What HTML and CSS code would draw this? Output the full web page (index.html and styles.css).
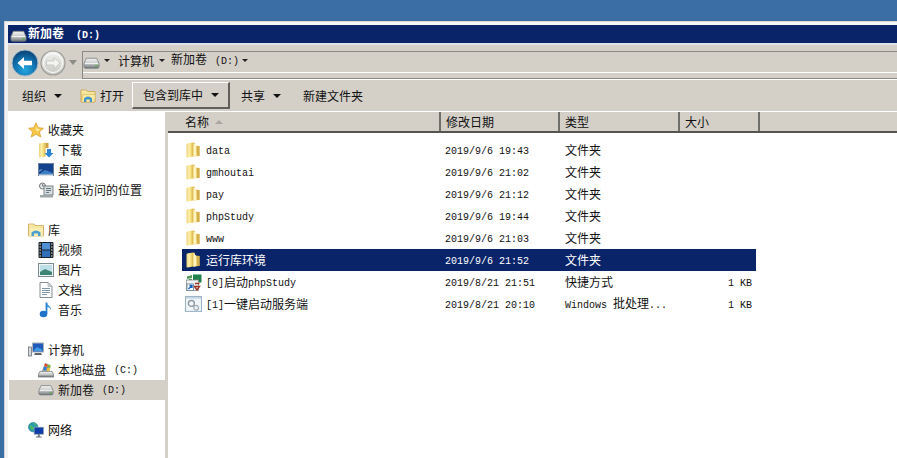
FILE: index.html
```html
<!DOCTYPE html>
<html lang="zh-CN">
<head>
<meta charset="utf-8">
<title>新加卷 (D:)</title>
<link rel="stylesheet" href="styles.css">
</head>
<body>
<svg class="defs" width="0" height="0" aria-hidden="true">
  <defs>
    <linearGradient id="gFolder" x1="0" y1="0" x2="1" y2="0">
      <stop offset="0" stop-color="#ecd078"/><stop offset=".4" stop-color="#fdf0ae"/><stop offset=".62" stop-color="#f8e284"/><stop offset="1" stop-color="#d9b650"/>
    </linearGradient>
    <linearGradient id="gDrive" x1="0" y1="0" x2="0" y2="1">
      <stop offset="0" stop-color="#f4f4f2"/><stop offset=".55" stop-color="#c5c8c8"/><stop offset="1" stop-color="#6f7578"/>
    </linearGradient>
    <radialGradient id="gBack" cx=".5" cy=".75" r=".75">
      <stop offset="0" stop-color="#23a8e0"/><stop offset=".6" stop-color="#0f6ba8"/><stop offset="1" stop-color="#0b3f6f"/>
    </radialGradient>
    <linearGradient id="gFwd" x1="0" y1="0" x2="0" y2="1">
      <stop offset="0" stop-color="#f2f2f0"/><stop offset="1" stop-color="#c6c6c2"/>
    </linearGradient>
    <linearGradient id="gLib" x1="0" y1="0" x2="0" y2="1">
      <stop offset="0" stop-color="#fdf0b0"/><stop offset="1" stop-color="#e8c768"/>
    </linearGradient>
    <symbol id="i-folder" viewBox="0 0 14 16">
      <path d="M1 1.500 7 .5V14.500L1.500 15.500C.8 15.500 .5 15 .5 14.500V2.500z" fill="url(#gFolder)"/>
      <path d="M7 .5 9 1V3.500L13.500 4V14L7 14.500z" fill="#e6c765"/>
      <path d="M7.500 1.500 10 3.500 10.500 14 7.500 15z" fill="#fff4bd"/>
      <path d="M11 4 13.500 4.300V13.800L11 14z" fill="#d4ae48"/>
    </symbol>
    <symbol id="i-drive" viewBox="0 0 18 12">
      <path d="M3.500 1h11L17 6.500V10a1.500 1.500 0 0 1-1.500 1.500h-13A1.500 1.500 0 0 1 1 10V6.500z" fill="url(#gDrive)" stroke="#75797b" stroke-width=".8"/>
      <path d="M2 6.500h14" stroke="#fff" stroke-width=".8"/>
      <rect x="13" y="8" width="2.500" height="1.600" fill="#5ab04a"/>
    </symbol>
    <symbol id="i-back" viewBox="0 0 28 28">
      <circle cx="14" cy="14" r="13" fill="url(#gBack)" stroke="#a9bccb" stroke-width="1"/>
      <path d="M6.500 14 13 8v3.800h8v4.400h-8V20z" fill="#fff"/>
    </symbol>
    <symbol id="i-fwd" viewBox="0 0 26 26">
      <circle cx="13" cy="13" r="12" fill="url(#gFwd)" stroke="#9d9d98" stroke-width="1.200"/>
      <circle cx="13" cy="13" r="9.500" fill="none" stroke="#fff" stroke-width="1"/>
      <path d="M20 13 14 7.500v3.500H6.500v4H14v3.500z" fill="#f4f4f2" stroke="#bdbdb8" stroke-width=".7"/>
    </symbol>
    <symbol id="i-open" viewBox="0 0 16 16">
      <path d="M1 2h5l1.500 1.500H15V14H1z" fill="url(#gLib)" stroke="#c69f45" stroke-width=".8"/>
      <path d="M1.500 14 3 6.500h12.500L14.500 14z" fill="#f8e9a3" stroke="#d2ad54" stroke-width=".5"/>
      <path d="M4 14V10.500Q8 6.500 12 10.500V14H9.800V11.500H6.200V14z" fill="#3d93c9"/>
    </symbol>
    <symbol id="i-star" viewBox="0 0 16 16">
      <path d="M8 .8 10.200 5.700 15.500 6.300 11.500 9.800 12.700 15 8 12.300 3.300 15 4.500 9.800 .5 6.300 5.800 5.700z" fill="#f7c64a" stroke="#d49a25" stroke-width=".7"/>
      <path d="M8 3.500 9.300 7 12.500 7.400 9.800 9.300 8 8z" fill="#fdf0a8"/>
    </symbol>
    <symbol id="i-download" viewBox="0 0 16 16">
      <path d="M1 1.500 7.500 .5V14.500L1 15.500z" fill="url(#gFolder)"/>
      <path d="M7.500 1h3v5h-3z" fill="#caa23f"/>
      <path d="M9 7h4v4h2.500L11 15.500 6.500 11H9z" fill="#2b85d6"/>
    </symbol>
    <symbol id="i-desktop" viewBox="0 0 16 14">
      <rect x=".5" y=".5" width="15" height="12" fill="#12418d" stroke="#6a7f9d"/>
      <path d="M1 11 7 7l8 3v2H1z" fill="#3e7fc4"/>
      <path d="M1 8 4 6.500" stroke="#8db4de"/>
      <rect x="1" y="11.500" width="14" height="1.500" fill="#d8dde2"/>
    </symbol>
    <symbol id="i-recent" viewBox="0 0 16 16">
      <circle cx="4.500" cy="4" r="3" fill="#e5e7e7" stroke="#6c7478"/>
      <path d="M4.500 2v2h2" stroke="#4a5256" fill="none" stroke-width=".7"/>
      <rect x="6" y="4" width="9" height="9" fill="#d8dcdc" stroke="#7b8386"/>
      <path d="M8 6.500h5M8 8.500h5M8 10.500h3" stroke="#5d7a86"/>
      <rect x="2" y="13" width="13" height="2.500" fill="#9da7aa"/>
    </symbol>
    <symbol id="i-lib" viewBox="0 0 16 16">
      <path d="M.5 2h5.500l1 1.500H15.500V14H.5z" fill="url(#gLib)" stroke="#c9a655" stroke-width=".8"/>
      <path d="M1 14 1.500 6H15V14z" fill="#fbeeb2"/>
      <path d="M3.500 14V10.500Q8 6.500 12.500 10.500V14H10V11.500H6V14z" fill="#4aa0cf"/>
    </symbol>
    <symbol id="i-video" viewBox="0 0 15 16">
      <rect width="15" height="16" rx="1" fill="#1c2328"/>
      <rect x="3.500" y="1" width="8" height="6.500" fill="#4f8fd6"/>
      <rect x="3.500" y="8.500" width="8" height="6.500" fill="#2f6fb8"/>
      <path d="M1 2h1.500M1 5h1.500M1 8h1.500M1 11h1.500M1 14h1.500M12.500 2H14M12.500 5H14M12.500 8H14M12.500 11H14M12.500 14H14" stroke="#d8dee3" stroke-width="1.200"/>
    </symbol>
    <symbol id="i-picture" viewBox="0 0 16 14">
      <rect x=".5" y=".5" width="15" height="13" fill="#f0f4f5" stroke="#7d8b92"/>
      <rect x="2" y="2" width="12" height="10" fill="#bfdfe6"/>
      <path d="M2 9 7 6l7 3v3H2z" fill="#3d8474"/>
    </symbol>
    <symbol id="i-doc" viewBox="0 0 14 16">
      <path d="M1 .5H9L13 4.500V15.500H1z" fill="#fdfdfd" stroke="#848e94"/>
      <path d="M9 .5V4.500H13z" fill="#d5dadd" stroke="#848e94" stroke-width=".5"/>
      <path d="M3 6.500h8M3 8.500h8M3 10.500h8M3 12.500h5" stroke="#7f98a8"/>
    </symbol>
    <symbol id="i-music" viewBox="0 0 14 16">
      <path d="M7.500 .5V11.500" stroke="#2b7fd0" stroke-width="1.800"/>
      <path d="M8 1c.5 3 4.500 3 4 7-.7-2-2.500-2.800-4-3z" fill="#3d95de"/>
      <ellipse cx="4.500" cy="12" rx="3.800" ry="3.200" fill="#1f73c6"/>
    </symbol>
    <symbol id="i-computer" viewBox="0 0 16 16">
      <rect x="4.500" y="1" width="11" height="9" fill="#1e5bbb" stroke="#aab2b8"/>
      <path d="M6 8 9 5l5 2.500V9H6z" fill="#3f9ae0"/>
      <rect x=".5" y="5" width="3" height="9" fill="#d5d9dc" stroke="#596268" stroke-width=".7"/>
      <path d="M7 11h6l1 2H6z" fill="#5d666c"/>
    </symbol>
    <symbol id="i-localdisk" viewBox="0 0 17 17">
      <path d="M2 10h13l1.500 3v3H.5v-3z" fill="url(#gDrive)" stroke="#5f6669" stroke-width=".7"/>
      <path d="M4 10 7.500 1 13 3.500 12 10z" fill="#8b99a1"/>
      <rect x="7" y="2" width="3" height="3" fill="#e2512d"/>
      <rect x="10.300" y="3" width="3" height="3" fill="#7cb73a"/>
      <rect x="6" y="5.500" width="3" height="3" fill="#2d7ed8"/>
      <rect x="9.500" y="6.500" width="3" height="3" fill="#f4c22d"/>
    </symbol>
    <symbol id="i-network" viewBox="0 0 17 17">
      <circle cx="5.500" cy="5.500" r="5" fill="#2b9db3" stroke="#1d6f82" stroke-width=".6"/>
      <path d="M2 4c2-1 3 1 4 2S4 9 3 8zM6 1c2 0 3 1 3 3L7 3z" fill="#4fba5a"/>
      <rect x="6.500" y="5.500" width="10" height="7.500" fill="#103ea8" stroke="#9da7ae" stroke-width=".7"/>
      <path d="M10.500 13h2v2.500h-2zM8.500 15.500h6v1h-6z" fill="#68727a"/>
    </symbol>
    <symbol id="i-php" viewBox="0 0 17 17">
      <rect x="8" y=".5" width="8.500" height="8" fill="#22814a"/>
      <path d="M2 2.500 7 1v3L2 5zM4 5h3v2H4z" fill="#4c9a53"/>
      <rect x="1.500" y="6" width="12" height="10.500" fill="#eef2f2" stroke="#7b8488" stroke-width=".7"/>
      <rect x="2" y="10" width="6.500" height="6.500" fill="#fff" stroke="#4f6f8a" stroke-width=".7"/>
      <path d="M3.500 15 6.500 12M4.500 11.500H7V14" stroke="#0f5ec2" stroke-width="1.300" fill="none"/>
      <path d="M10 9.500h4.500M9.500 12.500h5L12 16z" stroke="#a0362a" stroke-width="1.400" fill="none"/>
    </symbol>
    <symbol id="i-bat" viewBox="0 0 16 16">
      <rect x=".5" y=".5" width="15" height="14" fill="#f1f5f8" stroke="#9cb4c8"/>
      <rect x="1" y="1" width="14" height="1.500" fill="#c3d5e4"/>
      <circle cx="6" cy="7" r="2.800" fill="none" stroke="#8f9ba3" stroke-width="1.300"/>
      <circle cx="10.500" cy="11" r="2.200" fill="none" stroke="#a4aeb5" stroke-width="1.200"/>
    </symbol>
  </defs>
</svg>

<div class="window">
  <div class="titlebar">
    <svg class="icon-title"><use href="#i-drive"/></svg>
    <span class="title-text">新加卷<span class="lat title-letter">(D:)</span></span>
  </div>

  <div class="addressbar">
    <div class="nav">
      <svg class="btn-back"><use href="#i-back"/></svg>
      <svg class="btn-fwd"><use href="#i-fwd"/></svg>
      <span class="arrow-hollow"></span>
    </div>
    <div class="crumbs">
      <svg class="icon-crumb"><use href="#i-drive"/></svg>
      <span class="tri tri-small"></span>
      <span class="crumb crumb-computer">计算机</span>
      <span class="tri tri-small"></span>
      <span class="crumb crumb-volume">新加卷<span class="lat letter">(D:)</span></span>
      <span class="tri tri-small"></span>
    </div>
  </div>

  <div class="toolbar">
    <span class="tool tool-organize">组织<span class="tri"></span></span>
    <span class="tool tool-open"><svg class="icon16"><use href="#i-open"/></svg>打开</span>
    <span class="tool tool-include">包含到库中<span class="tri"></span></span>
    <span class="tool tool-share">共享<span class="tri"></span></span>
    <span class="tool">新建文件夹</span>
  </div>

  <div class="main">
    <nav class="sidebar">
      <div class="group">
        <div class="nav-row"><svg class="icon16"><use href="#i-star"/></svg>收藏夹</div>
        <div class="nav-row child"><svg class="icon16"><use href="#i-download"/></svg>下载</div>
        <div class="nav-row child"><svg class="icon16"><use href="#i-desktop"/></svg>桌面</div>
        <div class="nav-row child"><svg class="icon16"><use href="#i-recent"/></svg>最近访问的位置</div>
      </div>
      <div class="group">
        <div class="nav-row"><svg class="icon16"><use href="#i-lib"/></svg>库</div>
        <div class="nav-row child"><svg class="icon16"><use href="#i-video"/></svg>视频</div>
        <div class="nav-row child"><svg class="icon16"><use href="#i-picture"/></svg>图片</div>
        <div class="nav-row child"><svg class="icon16"><use href="#i-doc"/></svg>文档</div>
        <div class="nav-row child"><svg class="icon16"><use href="#i-music"/></svg>音乐</div>
      </div>
      <div class="group">
        <div class="nav-row"><svg class="icon16"><use href="#i-computer"/></svg>计算机</div>
        <div class="nav-row child"><svg class="icon16"><use href="#i-localdisk"/></svg>本地磁盘<span class="lat letter">(C:)</span></div>
        <div class="nav-row child selected"><svg class="icon16"><use href="#i-drive"/></svg>新加卷<span class="lat letter">(D:)</span></div>
      </div>
      <div class="group">
        <div class="nav-row"><svg class="icon16"><use href="#i-network"/></svg>网络</div>
      </div>
    </nav>

    <section class="files">
      <div class="header">
        <div class="hcell h-name">名称<span class="sort"></span></div>
        <div class="hcell h-date">修改日期</div>
        <div class="hcell h-type">类型</div>
        <div class="hcell h-size">大小</div>
      </div>
      <div class="rows">
        <div class="row"><div class="c-name"><svg class="icon-file"><use href="#i-folder"/></svg><span class="lat">data</span></div><div class="c-date lat">2019/9/6 19:43</div><div class="c-type">文件夹</div><div class="c-size lat"></div></div>
        <div class="row"><div class="c-name"><svg class="icon-file"><use href="#i-folder"/></svg><span class="lat">gmhoutai</span></div><div class="c-date lat">2019/9/6 21:02</div><div class="c-type">文件夹</div><div class="c-size lat"></div></div>
        <div class="row"><div class="c-name"><svg class="icon-file"><use href="#i-folder"/></svg><span class="lat">pay</span></div><div class="c-date lat">2019/9/6 21:12</div><div class="c-type">文件夹</div><div class="c-size lat"></div></div>
        <div class="row"><div class="c-name"><svg class="icon-file"><use href="#i-folder"/></svg><span class="lat">phpStudy</span></div><div class="c-date lat">2019/9/6 19:44</div><div class="c-type">文件夹</div><div class="c-size lat"></div></div>
        <div class="row"><div class="c-name"><svg class="icon-file"><use href="#i-folder"/></svg><span class="lat">www</span></div><div class="c-date lat">2019/9/6 21:03</div><div class="c-type">文件夹</div><div class="c-size lat"></div></div>
        <div class="row active"><div class="c-name"><svg class="icon-file"><use href="#i-folder"/></svg>运行库环境</div><div class="c-date lat">2019/9/6 21:52</div><div class="c-type">文件夹</div><div class="c-size lat"></div></div>
        <div class="row"><div class="c-name"><svg class="icon-file icon-app"><use href="#i-php"/></svg><span class="lat">[0]</span>启动<span class="lat">phpStudy</span></div><div class="c-date lat">2019/8/21 21:51</div><div class="c-type">快捷方式</div><div class="c-size lat">1 KB</div></div>
        <div class="row"><div class="c-name"><svg class="icon-file icon-app"><use href="#i-bat"/></svg><span class="lat">[1]</span>一键启动服务端</div><div class="c-date lat">2019/8/21 20:10</div><div class="c-type"><span class="lat">Windows </span>批处理<span class="lat">...</span></div><div class="c-size lat">1 KB</div></div>
      </div>
    </section>
  </div>
</div>
</body>
</html>
```

FILE: styles.css
```css
* { box-sizing: border-box; }

html, body {
  margin: 0;
  height: 458px;
  overflow: hidden;
}

body {
  background: #3a6ea5;
  padding-top: 21px;
  font: 12px/20px "Noto Sans CJK SC", "Liberation Sans", sans-serif;
  color: #111;
}

.defs { display: block; height: 0; }

.lat {
  font-family: "Liberation Mono", "Noto Sans CJK SC", monospace;
  font-size: 10px;
}

.letter { padding-left: 8px; }
.title-letter { padding-left: 12px; font-weight: 700; }

.window {
  margin-left: 4px;
  height: 437px;
  background: #d4d0c8;
  border-top: 1px solid #dcd9d2;
  border-left: 1px solid #cfd3dc;
  display: flex;
  flex-direction: column;
  padding-left: 3px;
  padding-top: 3px;
  box-shadow: inset 3px 0 0 #f2f2f2, inset 0 3px 0 #f6f7f9;
}

.titlebar {
  height: 18px;
  flex: none;
  background: #0a246a;
  color: #fff;
  display: flex;
  align-items: center;
  padding-left: 2px;
  gap: 1px;
}

.title-text { font-weight: 700; line-height: 18px; }
.icon-title { width: 17px; height: 12px; margin-top: 4px; }

.addressbar {
  flex: none;
  height: 36px;
  display: flex;
  align-items: flex-end;
  border-top: 2px solid #dfe1ea;
}

.nav {
  width: 74px;
  height: 34px;
  padding-left: 3px;
  padding-top: 1px;
  display: flex;
  align-items: center;
  flex: none;
}

.btn-back { width: 28px; height: 28px; flex: none; }
.btn-fwd { width: 26px; height: 26px; flex: none; margin-left: 1px; }

.arrow-hollow {
  margin-left: 3px;
  border: 4px solid transparent;
  border-top: 5px solid #8d8d88;
  border-bottom-width: 0;
  flex: none;
}

.crumbs {
  flex: 1;
  height: 28px;
  border-top: 1px solid #8b8a85;
  border-bottom: 1px solid #8b8a85;
  border-left: 1px solid #8b8a85;
  box-shadow: inset 0 -5px 0 #d4d0c8, inset 0 -6px 0 #fff;
  display: flex;
  align-items: center;
  padding-bottom: 9px;
}

.crumb { line-height: 20px; }
.crumb-computer { margin: 0 5px 0 8px; }
.crumb-volume { margin: 0 3px 0 6px; }
.icon-crumb { width: 17px; height: 12px; margin-top: 4px; margin-right: 4px; flex: none; }

.tri {
  display: inline-block;
  border: 4px solid transparent;
  border-top: 4px solid #111;
  border-bottom-width: 0;
  flex: none;
  vertical-align: 2px;
  margin-left: 8px;
}

.tri-small {
  margin-left: 0;
  border-width: 3px 3px 0;
  border-top-color: #222;
}

.toolbar {
  flex: none;
  height: 33px;
  border-top: 1px solid #fff;
  border-bottom: 1px solid #fff;
  display: flex;
  align-items: center;
  padding-left: 14px;
  white-space: nowrap;
}

.tool { display: inline-flex; align-items: center; color: #111; }
.tool-organize { width: 56px; }
.tool-open { width: 54px; padding-left: 2px; }
.tool-include {
  width: 98px;
  height: 27px;
  padding-left: 10px;
  background: #d4d0c8;
  border: 1px solid #fff;
  border-right: 2px solid #605f5b;
  border-bottom: 2px solid #605f5b;
}
.tool-share { width: 62px; margin-left: 11px; }

.main {
  flex: 1;
  min-height: 0;
  display: flex;
}

.sidebar {
  width: 157px;
  flex: none;
  background: #fff;
  padding-top: 8px;
  display: flex;
  flex-direction: column;
  gap: 20px;
}

.nav-row {
  height: 20px;
  display: flex;
  align-items: center;
  padding-left: 20px;
  white-space: nowrap;
}
.nav-row .lat { padding-top: 2px; }
.nav-row.child { padding-left: 30px; }
.nav-row.selected { background: #d4d0c8; margin-left: 1px; padding-left: 29px; margin-right: -2px; }

.icon16 { width: 16px; height: 16px; flex: none; margin-right: 4px; }

.files {
  flex: 1;
  margin-left: 3px;
  background: #fff;
  min-width: 0;
  display: flex;
  flex-direction: column;
}

.header {
  flex: none;
  height: 21px;
  background: #d4d0c8;
  border-bottom: 2px solid #55544f;
  display: flex;
}

.hcell {
  display: flex;
  align-items: center;
  height: 100%;
  border-right: 2px solid #6f6e69;
  padding-left: 5px;
}
.h-name { width: 273px; padding-left: 17px; }
.h-date { width: 119px; }
.h-type { width: 120px; }
.h-size { width: 80px; }

.sort {
  margin-left: 6px;
  border: 4px solid transparent;
  border-bottom: 4px solid #a7a6a1;
  border-top-width: 0;
}

.rows {
  padding: 6px 0 0 14px;
}

.row {
  width: 574px;
  height: 22px;
  display: flex;
  align-items: center;
  white-space: nowrap;
}

.row.active { background: #0a246a; color: #fff; }

.c-name { width: 258px; display: flex; align-items: center; padding-left: 4px; }
.c-name .lat { padding-top: 4px; }
.icon-file { width: 14px; height: 16px; flex: none; margin-right: 6px; }
.icon-app { width: 17px; height: 17px; margin-left: -1px; margin-right: 4px; }
.c-date { width: 119px; padding-left: 5px; padding-top: 4px; }
.c-type { width: 120px; padding-left: 6px; }
.c-size { width: 77px; padding-right: 4px; text-align: right; padding-top: 4px; }
```
